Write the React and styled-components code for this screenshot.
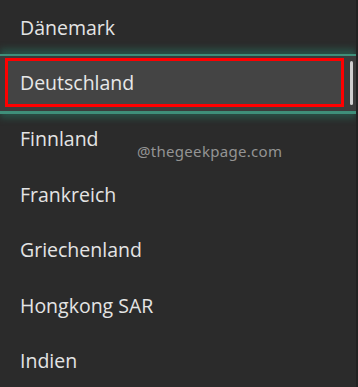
import styled, { createGlobalStyle } from 'styled-components'

const GlobalStyle = createGlobalStyle`
    html, body {
        margin: 0;
        padding: 0;
        background: #2b2b2b;
    }
`

const Panel = styled.div`
    position: relative;
    width: 358px;
    height: 387px;
    box-sizing: border-box;
    background: #2b2b2b;
    border-right: 2px solid #222;
    overflow: hidden;
    font-family: "Open Sans", "Noto Sans", sans-serif;
`

const List = styled.ul`
    list-style: none;
    margin: 0;
    padding: 0;
    display: flex;
    flex-direction: column;
`

const Row = styled.li`
    height: 55.5px;
    box-sizing: border-box;
    display: flex;
    align-items: center;
    padding-left: 20px;
    font-size: 19.5px;
    font-weight: 500;
    color: #e4e4e4;
`

const SelectedRow = styled.li`
    position: relative;
    z-index: 1;
    height: 55.5px;
    box-sizing: border-box;
    display: flex;
    align-items: stretch;
    gap: 6px;
    padding: 2px 3px 4px 5px;
    background: #3b3b3b;
    box-shadow:
        0 -2px 0 #3f8f7a,
        0 -7px 7px rgba(40, 140, 115, 0.4),
        0 3px 0 #3f8f7a,
        0 7px 7px rgba(40, 140, 115, 0.4);
`

const Highlight = styled.div`
    flex: 1;
    display: flex;
    align-items: center;
    padding-left: 12px;
    border: 3px solid #ff0000;
    background: #444444;
    font-size: 19.5px;
    font-weight: 500;
    color: #e8e8e8;
`

const Thumb = styled.div`
    width: 3px;
    margin: 3px 0 2px;
    border-radius: 2px;
    background: #cfcfcf;
`

const Watermark = styled.span`
    position: absolute;
    left: 137px;
    top: 141px;
    font-family: "Noto Sans", "Open Sans", sans-serif;
    font-size: 15px;
    color: #949494;
    letter-spacing: 0.3px;
`

const countries = ['Dänemark', 'Deutschland', 'Finnland', 'Frankreich', 'Griechenland', 'Hongkong SAR', 'Indien']

function App() {
    const selected = 'Deutschland'

    return (
        <>
            <GlobalStyle />
            <Panel>
                <List>
                    {countries.map(name =>
                        name === selected ? (
                            <SelectedRow key={name}>
                                <Highlight>{name}</Highlight>
                                <Thumb />
                            </SelectedRow>
                        ) : (
                            <Row key={name}>{name}</Row>
                        )
                    )}
                </List>
                <Watermark>@thegeekpage.com</Watermark>
            </Panel>
        </>
    )
}

export default App
